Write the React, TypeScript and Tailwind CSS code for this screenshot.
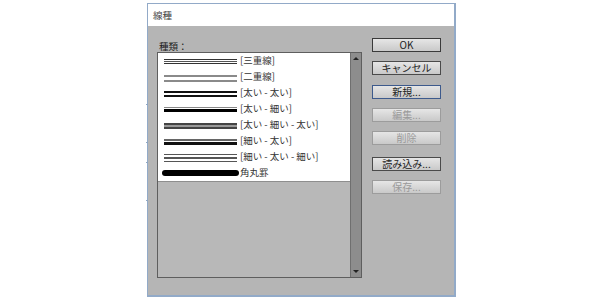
import React from "react";

const font = { fontFamily: '"Noto Sans CJK JP", "Noto Sans", sans-serif' };

type Seg = { y: number; h: number; c: string };

const rows: { label: string; segs: Seg[]; round?: boolean }[] = [
  { label: "[三重線]", segs: [{ y: 4, h: 1, c: "#333" }, { y: 6, h: 1, c: "#555" }, { y: 8, h: 1, c: "#333" }] },
  { label: "[二重線]", segs: [{ y: 4, h: 2, c: "#8a8a8a" }, { y: 9, h: 2, c: "#8a8a8a" }] },
  { label: "[太い - 太い]", segs: [{ y: 4, h: 2, c: "#111" }, { y: 8, h: 2, c: "#111" }] },
  { label: "[太い - 細い]", segs: [{ y: 4, h: 1, c: "#888" }, { y: 6, h: 3, c: "#000" }] },
  { label: "[太い - 細い - 太い]", segs: [{ y: 4, h: 2, c: "#444" }, { y: 6, h: 2, c: "#999" }, { y: 8, h: 2, c: "#444" }] },
  { label: "[細い - 太い]", segs: [{ y: 4, h: 2, c: "#666" }, { y: 7, h: 3, c: "#111" }] },
  { label: "[細い - 太い - 細い]", segs: [{ y: 3, h: 1, c: "#555" }, { y: 6, h: 2, c: "#555" }, { y: 10, h: 1, c: "#555" }] },
  { label: "角丸罫", segs: [], round: true },
];

function Btn({ label, variant, className }: { label: string; variant: "default" | "focus" | "normal" | "disabled"; className?: string }) {
  const border =
    variant === "default"
      ? "border-[#3a3a3a] border-[1.5px]"
      : variant === "focus"
      ? "border-[#3d5a8c] border"
      : variant === "disabled"
      ? "border-[#9c9c9c] border"
      : "border-[#4a4a4a] border";
  const text = variant === "disabled" ? "text-[#9a9a9a]" : "text-[#222]";
  return (
    <div
      className={`h-[14px] w-[69px] flex items-center justify-center bg-gradient-to-b from-[#e6e6e6] to-[#c9c9c9] text-[10px] leading-none ${border} ${text} ${className ?? ""}`}
      style={font}
    >
      {label}
    </div>
  );
}

export default function App() {
  return (
    <div className="relative w-[600px] h-[301px] bg-white overflow-hidden" style={font}>
      {/* small tick marks left of the dialog */}
      <div className="absolute left-[146px] top-[104px] w-[2px] h-px bg-[#8fa6c2]" />
      <div className="absolute left-[146px] top-[142px] w-[2px] h-px bg-[#8fa6c2]" />
      <div className="absolute left-[146px] top-[162px] w-[2px] h-px bg-[#8fa6c2]" />
      <div className="absolute left-[146px] top-[200px] w-[2px] h-px bg-[#8fa6c2]" />

      <div className="ml-[147px] mt-[3px] w-[309px] h-[294px] border border-r-2 border-b-2 border-[#92aac8] flex flex-col">
        <div className="h-[22px] bg-white flex items-center pl-[5px] text-[9.5px] text-[#444]">線種</div>
        <div className="flex-1 bg-[#b5b5b5] flex items-start">
          <div className="ml-[9px] pt-[14px] w-[205px] flex flex-col">
            <div className="h-[12px] text-[9.5px] leading-[12px] text-[#222] pl-[2px]">種類：</div>
            <div className="h-[226px] border border-[#5e5e5e] flex">
              <div className="flex-1 flex flex-col">
                <div className="bg-white flex flex-col">
                  {rows.map((r, i) => (
                    <div key={i} className="h-[16px] flex items-center">
                      <div className="ml-[4px] w-[77px] h-[12px] relative">
                        {r.round ? (
                          <div className="absolute left-0 top-[3px] w-[77px] h-[6px] rounded-full bg-black" />
                        ) : (
                          r.segs.map((s, j) => (
                            <div
                              key={j}
                              className="absolute left-[2px] w-[73px]"
                              style={{ top: s.y, height: s.h, background: s.c }}
                            />
                          ))
                        )}
                      </div>
                      <span className="ml-[1px] text-[9.5px] leading-none text-[#333] whitespace-nowrap">{r.label}</span>
                    </div>
                  ))}
                </div>
                <div className="flex-1 bg-[#b8b8b8] border-t border-[#8e8e8e]" />
              </div>
              <div className="w-[11px] bg-[#8d8d8d] border-l border-[#6f6f6f] flex flex-col items-center justify-between py-[4px]">
                <div className="w-0 h-0 border-l-[3px] border-r-[3px] border-b-[3px] border-l-transparent border-r-transparent border-b-[#222]" />
                <div className="w-0 h-0 border-l-[3px] border-r-[3px] border-t-[3px] border-l-transparent border-r-transparent border-t-[#222]" />
              </div>
            </div>
          </div>
          <div className="ml-[10px] pt-[12px] flex flex-col">
            <Btn label="OK" variant="default" />
            <Btn label="キャンセル" variant="normal" className="mt-[9px]" />
            <Btn label="新規..." variant="focus" className="mt-[10px]" />
            <Btn label="編集..." variant="disabled" className="mt-[9px]" />
            <Btn label="削除" variant="disabled" className="mt-[9px]" />
            <Btn label="読み込み..." variant="normal" className="mt-[12px]" />
            <Btn label="保存..." variant="disabled" className="mt-[9px]" />
          </div>
        </div>
      </div>
    </div>
  );
}
